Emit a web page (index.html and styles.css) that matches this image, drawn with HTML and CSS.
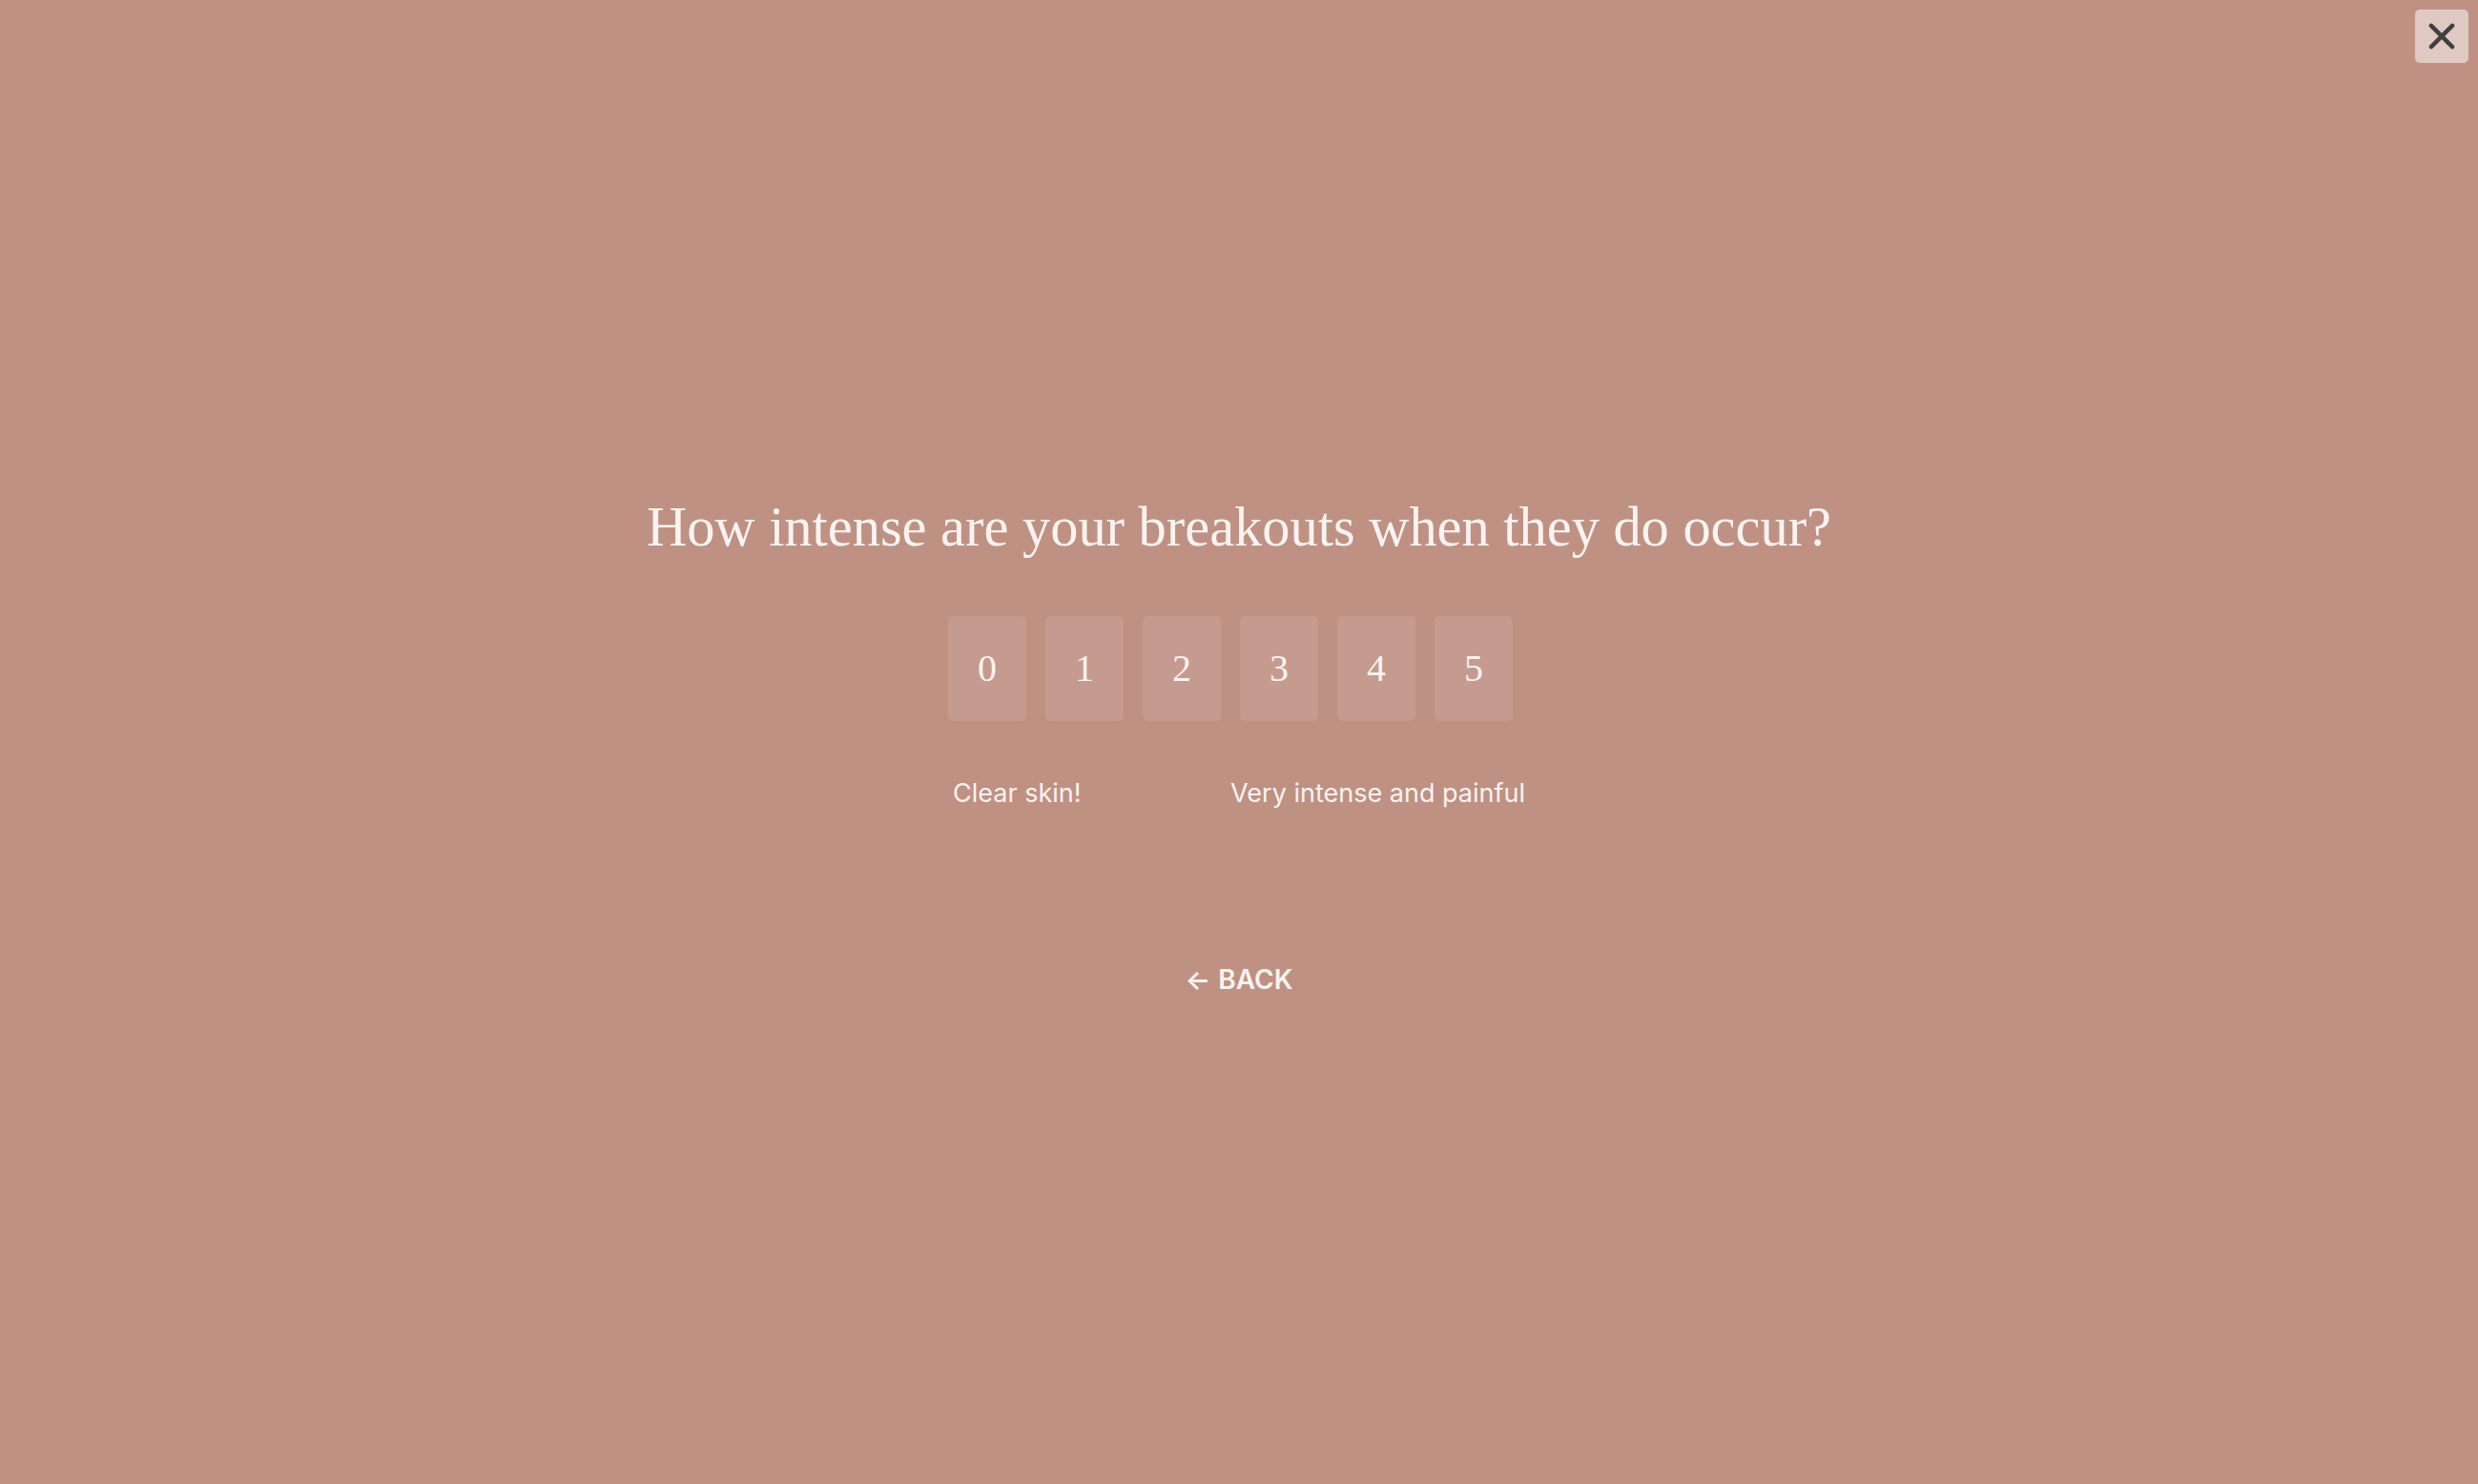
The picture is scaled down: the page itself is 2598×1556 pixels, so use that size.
FILE: index.html
```html
<!DOCTYPE html>
<html lang="en">
<head>
<meta charset="utf-8">
<title>Quiz</title>
<link rel="stylesheet" href="styles.css">
</head>
<body>
<button class="close" aria-label="Close">
  <svg viewBox="0 0 24 24" width="28" height="28"><path d="M2.5 2.5 L21.5 21.5 M21.5 2.5 L2.5 21.5" stroke="#3f3f3f" stroke-width="3.8" stroke-linecap="round" fill="none"/></svg>
</button>
<main class="quiz">
  <h1 class="question">How intense are your breakouts when they do occur?</h1>
  <div class="scale">
    <div class="options">
      <button class="opt">0</button>
      <button class="opt">1</button>
      <button class="opt">2</button>
      <button class="opt">3</button>
      <button class="opt">4</button>
      <button class="opt">5</button>
    </div>
    <div class="labels">
      <span>Clear skin!</span>
      <span>Very intense and painful</span>
    </div>
  </div>
  <button class="back"><span class="arrow">&larr;</span> BACK</button>
</main>
</body>
</html>
```
FILE: styles.css
```css
html, body {
  margin: 0;
  height: 100%;
}
body {
  background: #bf9183;
  color: #faf3f1;
  font-family: "Inter", "Noto Sans", sans-serif;
  overflow: hidden;
}
.close {
  position: absolute;
  top: 10px;
  right: 10px;
  width: 56px;
  height: 56px;
  border: 0;
  border-radius: 5px;
  background: #e0c9c3;
  display: flex;
  align-items: center;
  justify-content: center;
  padding: 0;
}
.quiz {
  height: 100%;
  display: flex;
  flex-direction: column;
  align-items: center;
  justify-content: center;
}
.question {
  margin: 0 0 53px;
  font-family: "Liberation Serif", "DejaVu Serif", serif;
  font-weight: 400;
  font-size: 58.4px;
  line-height: 80px;
  color: #faf3f1;
}
.scale {
  width: 610px;
}
.options {
  display: flex;
  gap: 20px;
}
.opt {
  width: 82px;
  height: 110px;
  border: 0;
  border-radius: 5px;
  background: #c59a8f;
  color: #faf3f1;
  font-family: "Liberation Serif", "DejaVu Serif", serif;
  font-size: 40px;
  padding: 0;
}
.labels {
  display: flex;
  justify-content: space-between;
  padding: 0 5px;
  margin-top: 56px;
  font-size: 27px;
  line-height: 40px;
}
.back {
  margin-top: 158px;
  border: 0;
  background: none;
  color: #faf3f1;
  font-family: "Inter", "Noto Sans", sans-serif;
  font-weight: 600;
  font-size: 28px;
  padding: 0;
  display: flex;
  align-items: center;
  gap: 8px;
}
.arrow {
  font-size: 28px;
}
```
